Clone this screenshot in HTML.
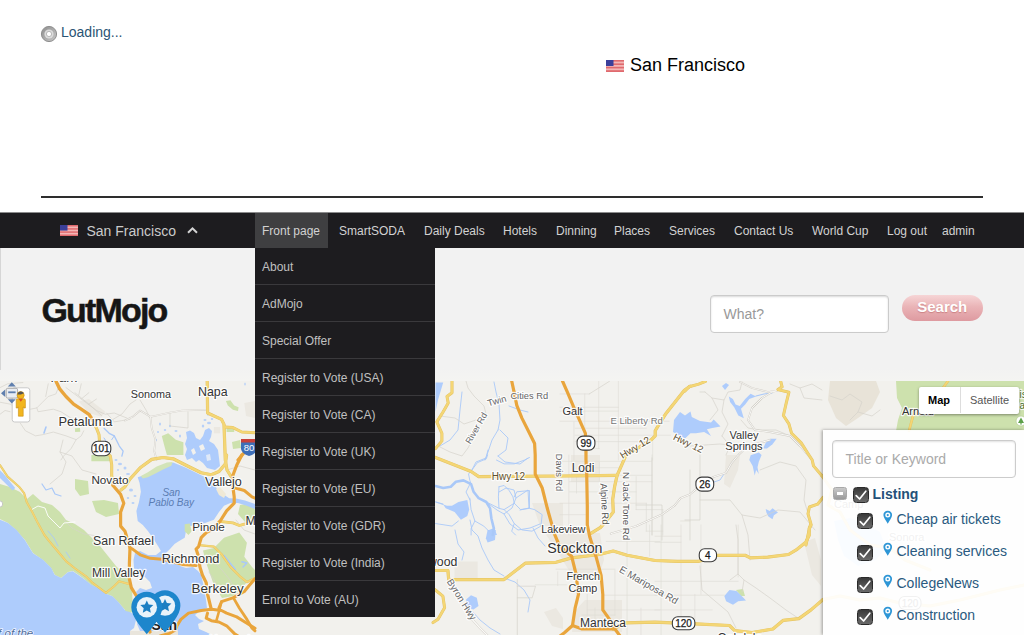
<!DOCTYPE html>
<html><head><meta charset="utf-8">
<style>
*{box-sizing:border-box;margin:0;padding:0}
html,body{width:1024px;height:635px;overflow:hidden;background:#fff;font-family:"Liberation Sans",Arial,sans-serif;}
body{position:relative}
.abs{position:absolute}
#loading{left:61px;top:24px;font-size:14px;color:#2a5474;line-height:17px}
#spin{left:40px;top:24.5px;width:18px;height:18px}
#city{left:630px;top:54.2px;font-size:18px;color:#000;line-height:22px;white-space:nowrap}
.flag{width:18px;height:12px}
#hr{left:41px;top:195.5px;width:942px;height:2px;background:#2e2e2e}
#nav{left:0;top:212px;width:1024px;height:36px;background:#1d1c1f;border-top:1px solid #8b8b8c}
#navt span{position:absolute;top:1px;line-height:37px;font-size:12px;color:#d2d2d2;white-space:nowrap}
#fp{left:255px;top:213px;width:73px;height:35px;background:#3f3f41}
#hdr{left:0;top:248px;width:1024px;height:133px;background:linear-gradient(#f2f2f2 0,#f2f2f2 120px,#f4f4f2 133px)}
#hdrb{left:0;top:248px;width:1px;height:122px;background:#d6d6d6}
#logo{left:41.5px;top:290px;font-size:34px;font-weight:bold;letter-spacing:-1.85px;color:#161616;line-height:40px;-webkit-text-stroke:.5px #161616}
#what{left:710px;top:294.5px;width:179px;height:38.5px;border:1px solid #cbcbcb;border-radius:4px;background:#fff;font-size:14px;color:#999;line-height:37px;padding-left:12.5px;box-shadow:inset 0 1px 2px rgba(0,0,0,.15)}
#sbtn{left:901.5px;top:294.5px;width:81.5px;height:26.5px;border-radius:13px;background:linear-gradient(#f6d5d6,#eab4b7 45%,#de9aa0);color:#fff;font-weight:bold;font-size:15px;text-align:center;line-height:24px;text-shadow:0 1px 1px rgba(170,80,80,.45)}
#dd{left:255px;top:248px;width:180px;height:369px;background:#1d1c1f}
#dd div{height:37px;line-height:39px;font-size:12px;color:#c0c0c0;padding-left:7px;border-bottom:1px solid #3a393c;white-space:nowrap}
#dd div:last-child{border-bottom:none;height:36px}
#map{left:0;top:381px;width:1024px;height:254px;background:#f2f1ed;overflow:hidden}
#panel{left:823px;top:430px;width:201px;height:205px;background:rgba(255,255,255,.93);box-shadow:-1px 0 3px rgba(0,0,0,.35)}
#kw{left:832px;top:439.5px;width:184px;height:38.5px;border:1px solid #ccc;border-radius:4px;background:#fff;font-size:14px;color:#aaa;line-height:36px;padding-left:12.5px;box-shadow:inset 0 1px 2px rgba(0,0,0,.12)}
.cb{position:absolute;width:16px;height:16px;border-radius:3.5px;background:linear-gradient(#3a3a3a,#6a6a6a);border:1px solid #2a2a2a}
.li{position:absolute;left:896.5px;font-size:14px;color:#2a5a80;line-height:17px;white-space:nowrap}
.pin{position:absolute;left:883px;width:9.5px;height:13.5px}
#mt{left:918.5px;top:387px;width:100px;height:26.5px;background:#fff;box-shadow:0 1px 3px rgba(0,0,0,.4);border-radius:2px;font-size:11px;line-height:26px}
#mt b{position:absolute;left:0;width:41px;text-align:center;color:#000}
#mt i{position:absolute;left:41px;width:59px;text-align:center;font-style:normal;color:#555;border-left:1px solid #ddd}
</style></head><body>
<svg id="spin" class="abs" viewBox="0 0 18 18"><defs><linearGradient id="sg" x1="0" y1="0" x2="1" y2="1"><stop offset="0" stop-color="#8e8e8e"/><stop offset="1" stop-color="#c8c8c8"/></linearGradient></defs><circle cx="9" cy="9" r="7.6" fill="url(#sg)" stroke="#8f8f8f" stroke-width="1"/><circle cx="9" cy="9" r="4.6" fill="#dcdcdc"/><circle cx="9" cy="9" r="2.6" fill="#fff" stroke="#aaa" stroke-width=".8"/></svg>
<div id="loading" class="abs">Loading...</div>
<svg class="abs flag" style="left:606px;top:59.5px" viewBox="0 0 18 12"><rect width="18" height="12" fill="#f3b5b5"/><g fill="#e06a6e"><rect y="0" width="18" height="1.6"/><rect y="3.4" width="18" height="1.6"/><rect y="6.8" width="18" height="1.6"/><rect y="10.2" width="18" height="1.8"/></g><rect width="7.5" height="6" fill="#3b3f9a"/></svg>
<div id="city" class="abs">San Francisco</div>
<div id="hr" class="abs"></div>
<div id="nav" class="abs"></div>
<div id="fp" class="abs"></div>
<svg class="abs flag" style="left:60px;top:224.7px;height:11.2px" viewBox="0 0 18 12" preserveAspectRatio="none"><rect width="18" height="12" fill="#f3b5b5"/><g fill="#e06a6e"><rect y="0" width="18" height="1.6"/><rect y="3.4" width="18" height="1.6"/><rect y="6.8" width="18" height="1.6"/><rect y="10.2" width="18" height="1.8"/></g><rect width="7.5" height="6" fill="#3b3f9a"/></svg>
<div id="navt" class="abs" style="left:0;top:212px;width:1024px;height:36px">
<span style="left:86.5px;font-size:14px;color:#cbcbcb">San Francisco</span>
<span style="left:262px">Front page</span>
<span style="left:339px">SmartSODA</span>
<span style="left:424px">Daily Deals</span>
<span style="left:503px">Hotels</span>
<span style="left:556px">Dinning</span>
<span style="left:614px">Places</span>
<span style="left:669px">Services</span>
<span style="left:734px">Contact Us</span>
<span style="left:812px">World Cup</span>
<span style="left:887px">Log out</span>
<span style="left:942px">admin</span>
</div>
<svg class="abs" style="left:186px;top:226px;width:13px;height:9px" viewBox="0 0 13 9"><path d="M2 6.7 L6.5 2.3 L11 6.7" fill="none" stroke="#d4d4d4" stroke-width="2"/></svg>
<div id="hdr" class="abs"></div><div id="hdrb" class="abs"></div>
<div id="logo" class="abs">GutMojo</div>
<div id="what" class="abs">What?</div>
<div id="sbtn" class="abs">Search</div>
<div id="map" class="abs">
<svg width="1024" height="254" viewBox="0 381 1024 254" style="position:absolute;left:0;top:0;font-family:'Liberation Sans',Arial,sans-serif">
<polygon points="0,484 10,487 20,492 27,499 33,494 42,502 52,505 60,512 66,520 75,524 84,530 92,538 100,546 108,556 116,566 124,574 130,580 132,612 126,611 119,603 112,596 106,594 101,590 91,585 83,578 73,571 68,572 61,578 55,575 51,568 43,560 33,553 25,540 16,530 8,523 0,519" fill="#cde1ad" />
<polygon points="75,479 88,481 89,494 80,496 75,489" fill="#cde1ad" />
<polygon points="92,501 104,500 118,503 119,514 106,517 96,512" fill="#cde1ad" />
<polygon points="161.8,435.9 168.2,433.3 175.8,439.7 183.4,442.2 183.4,454.9 166.9,454.9 164.4,446" fill="#cde1ad" />
<polygon points="225.9,401 230.4,400.3 234.2,405.4 238.6,407.3 238,411.1 232.9,409.8 227.8,405.4" fill="#cde1ad" />
<polygon points="226.6,427 234.2,427 234.2,432 226.6,432" fill="#cde1ad" />
<polygon points="244.3,402.9 255,401 255,418.1 246,416" fill="#ebe8e1" />
<polygon points="213.9,427 220.2,427 220.2,433.3 213.9,433.3" fill="#ebe8e1" />
<polygon points="232,442 240,440 241,448 233,449" fill="#cde1ad" />
<polygon points="224,537.7 239.3,532.6 246.9,542.8 244.3,556.7 252,566.9 255,570 255,578 247,582 240,590 232.9,596 222,598 213.9,585 206.2,563.1 203,550.4 213.9,547.9" fill="#cde1ad" />
<polygon points="240,505 252,503 255,510 255,520 245,522 238,514" fill="#cde1ad" />
<polygon points="125,588 132,588 133,612 125,614" fill="#cde1ad" />
<polygon points="532,503 563,503 563,526 540,526" fill="#ebe8e1" />
<polygon points="545,533 600,533 604,560 598,578 575,580 560,556" fill="#ebe8e1" />
<polygon points="585,600 622,600 622,632 572,632 574,612" fill="#ebe8e1" />
<polygon points="571,455 600,455 600,482 571,482" fill="#ebe8e1" />
<polygon points="726,455 740,455 738,470 730,488 724,484" fill="#ebe8e1" />
<polygon points="804,542 815,538 821,560 821,586 812,575" fill="#ebe8e1" />
<polygon points="544,612 556,608 563,618 563,629 552,626" fill="#ebe8e1" />
<polygon points="454.5,561.5 477.7,561.5 477.7,578 454.5,578" fill="#ebe8e1" />
<polygon points="830,381 876,381 880,392 872,408 858,418 846,426 836,418 828,400" fill="#e8e3d8" />
<polygon points="896,381 1024,381 1024,431 896,431 898,420 902,408 897,398" fill="#cde1ad" />
<polygon points="78.7102,401.582 88.8663,399.043 105.37,411.738 101.562,416.816 88.8663,413.007" fill="#ebe8e1" />
<polygon points="74.9016,428.242 79.9797,427.988 80.2336,431.796 75.1555,432.05" fill="#cde1ad" />
<polygon points="91.4054,454.902 109.179,454.902 110.448,461.249 91.4054,461.249" fill="#cde1ad" />
<polygon points="736,590 743,589 745,596 741,596" fill="#cde1ad" />
<polygon points="0,519.7 8,523 16.5,530 24.8,540 33,553.2 43,559.8 51.3,568 54.6,574.7 61.2,578 67.8,572.2 72.8,571.3 82.7,578 91,584.6 100.9,589.5 105.9,593.7 112.5,596.2 119,602.8 125.7,611 130,612 133,614 136,620 134,628 130,631 130,636 0,636" fill="#aeccfc" />
<polygon points="0,470.2 3.8,474 15.2,488 12.7,490.5 0,477.9" fill="#aeccfc" />
<polygon points="137.7,477.2 147.9,474 156.7,467.7 165.6,464.5 173.2,462.6 186,467.7 201.2,475.3 212.6,480.4 216.4,488 221.5,493.1 229.1,498.2 236,498.5 245,500.5 255,504 255,509 246,505.5 238,503 230.4,503 224,505.8 219,512.1 213.9,519.7 203.7,523.6 196.1,524.2 191,526.1 185,525 186,531.3 184.7,537.7 178.3,541.5 174.5,544 170,549 166,553 170,558 176,561 180,566 186,568 193,567 198,571 201.2,575 204,587.7 206,600 207,608 200,611 195,615 199,619 204,621 198,624 199,629 206,632 214,636 176,636 176,631 140,631 137,624 139,616 143,610 141,604 138,598 136,592 140,588 146,590 152,588 150,582 145,577 138,574 134,568 133.5,560 135,553 140,551 148,555 156,555 161,551 158,546 152.9,538 147.9,531 142.8,525 137.7,521 136.4,510.9 139,502 140.9,491.8 139.6,482.9" fill="#aeccfc" />
<polygon points="186,432 190,430.5 194,433 196,438 200,440 203,436 205,430 209,428 212,431 211,437 209,441 214,444 218,450 219,458 220,466 215,470 207,468 203,463 199,460 196,462 192,458 187,460 185,455 187,449 185,444 187,438" fill="#aeccfc" />
<polygon points="435.5,382.5 443.2,382.5 438,400 435.5,411.7" fill="#aeccfc" />
<polygon points="685,415.5 690.5,411.4 691.8,416.9 700,421 711,422.4 713.7,419.6 720.5,426.5 712.3,427.9 706.9,429.2 711,436.1 704.1,432 696,433.3 690.5,433.3 685,438.4 673,432 674,420 680,412" fill="#aeccfc" />
<polygon points="728.8,396.4 732.9,399.1 735.6,404.6 739.7,406 745.2,399.1 750.6,393.7 756.1,396.4 749.3,399.1 745.2,404.6 741,408.7 743.8,418.3 738.3,415.5 734.2,407.3 730.1,401.9" fill="#aeccfc" />
<polygon points="722,386 726,383 729,385 725,390" fill="#aeccfc" />
<polygon points="763,448.4 765.7,442.9 769.8,438.8 776.6,438.8 772.5,444.3 767,448.4" fill="#aeccfc" />
<polygon points="749.3,460 750.6,455.2 758.8,452.5 761.6,455 758.8,461.8 757.5,467.3 758.8,474.1 756.1,470 754.7,475.5 752.7,465.9" fill="#aeccfc" />
<polygon points="765.7,509 769.8,511 772.5,508.3 778,512.4 773.9,515.2 772.5,519.3 768.4,516.5 766.4,512.4" fill="#aeccfc" />
<polygon points="724.3,596.1 729.5,590 736.5,590.9 741.7,596.1 746,600.4 738.2,601.3 733,604.7 726.1,601.3" fill="#aeccfc" />
<polygon points="452,505.8 458.4,502 467.3,500 469.2,509.6 467.3,515.9 460.9,519.7 454.6,512.1 445.7,508.3 443.2,504.5 447,505.8" fill="#aeccfc" />
<polygon points="466.1,599.5 471,595.3 476.8,597.8 478.5,606.1 473.5,609.4 466.9,607.7" fill="#aeccfc" />
<polygon points="487.6,530 495.8,530 495,539.9 487.6,542.4 485.9,538.3" fill="#aeccfc" />
<polygon points="489,530 494,528 497,535 491,535" fill="#aeccfc" />
<polygon points="834,521 850,518 866,524 880,532 886,548 876,560 858,566 844,556 838,540" fill="#aeccfc" />
<polygon points="140.869,475.947 147.851,472.139 156.738,466.426 166.894,462.617 172.607,461.982 171.337,465.791 163.086,469.599 155.468,473.408 147.851,477.217 142.773,478.486" fill="#d3e4b8" />
<polygon points="184.667,524.189 189.745,523.554 191.65,531.171 188.476,534.98 184.667,531.171" fill="#cde1ad" />
<ellipse cx="205" cy="420" rx="1.5" ry="1.1" fill="#b7d0f8"/>
<ellipse cx="209" cy="423" rx="2" ry="1.25" fill="#b7d0f8"/>
<ellipse cx="203" cy="426" rx="1.25" ry="1.5" fill="#b7d0f8"/>
<ellipse cx="212" cy="419" rx="1.25" ry="1" fill="#b7d0f8"/>
<ellipse cx="160" cy="424" rx="1" ry="1.5" fill="#b7d0f8"/>
<ellipse cx="165" cy="430" rx="1.25" ry="1" fill="#b7d0f8"/>
<ellipse cx="170" cy="426" rx="1" ry="1.25" fill="#b7d0f8"/>
<ellipse cx="158" cy="432" rx="1" ry="1" fill="#b7d0f8"/>
<ellipse cx="176" cy="431" rx="1.5" ry="1" fill="#b7d0f8"/>
<ellipse cx="180" cy="436" rx="1" ry="1.5" fill="#b7d0f8"/>
<ellipse cx="156" cy="440" rx="1" ry="1.25" fill="#b7d0f8"/>
<ellipse cx="208" cy="414" rx="0.75" ry="2" fill="#b7d0f8"/>
<ellipse cx="245" cy="384" rx="0.75" ry="1.5" fill="#b7d0f8"/>
<ellipse cx="116" cy="460" rx="1.5" ry="1" fill="#b7d0f8"/>
<ellipse cx="120" cy="464" rx="2" ry="1.25" fill="#b7d0f8"/>
<ellipse cx="125" cy="468" rx="1.5" ry="1.5" fill="#b7d0f8"/>
<ellipse cx="128" cy="474" rx="2" ry="1" fill="#b7d0f8"/>
<ellipse cx="118" cy="470" rx="1" ry="1" fill="#b7d0f8"/>
<ellipse cx="126" cy="484" rx="1.5" ry="1.25" fill="#b7d0f8"/>
<ellipse cx="131" cy="490" rx="2" ry="1.5" fill="#b7d0f8"/>
<ellipse cx="135" cy="496" rx="1.5" ry="1" fill="#b7d0f8"/>
<ellipse cx="128" cy="498" rx="1.25" ry="1" fill="#b7d0f8"/>
<ellipse cx="133" cy="503" rx="1.5" ry="1" fill="#b7d0f8"/>
<polygon points="216,489 220,487 226,494 224,498 219,495" fill="#f0e9d6" />
<polygon points="199,446 203,444 205,449 201,451" fill="#f2f1ed" />
<polygon points="191,450 194,448 196,453 193,455" fill="#f2f1ed" />
<polygon points="206,455 210,454 211,460 207,461" fill="#dfe9f8" />
<polygon points="130,631 178,631 178,636 130,636" fill="#e9e5dc" />
<polyline points="42,484 46,490 52,488 55,494 61,496" fill="none" stroke="#a9c8f8" stroke-width="1.2" stroke-linejoin="round" stroke-linecap="round" />
<polyline points="104,438 108,444 110,452" fill="none" stroke="#a9c8f8" stroke-width="1" stroke-linejoin="round" stroke-linecap="round" />
<polyline points="46,427 44,433" fill="none" stroke="#a9c8f8" stroke-width="1.6" stroke-linejoin="round" stroke-linecap="round" />
<polyline points="224,555.5 230,563 235.4,569.4" fill="none" stroke="#a9c8f8" stroke-width="1.6" stroke-linejoin="round" stroke-linecap="round" />
<polyline points="241.8,561.8 246.9,563 243,567" fill="none" stroke="#a9c8f8" stroke-width="1.4" stroke-linejoin="round" stroke-linecap="round" />
<polyline points="48,531 54,538 58,546" fill="none" stroke="#a9c8f8" stroke-width="0.9" stroke-linejoin="round" stroke-linecap="round" />
<polyline points="66,552 70,558" fill="none" stroke="#a9c8f8" stroke-width="0.9" stroke-linejoin="round" stroke-linecap="round" />
<polyline points="756,396 764,394 772,393" fill="none" stroke="#a9c8f8" stroke-width="1.2" stroke-linejoin="round" stroke-linecap="round" />
<polyline points="435.5,486.1 443.2,488 450.8,486.7 455.9,481.7 463.5,480.4 471.1,484.2 473.6,491.8 478.7,498.2 486.3,502 490.1,508.3 491.4,518.5 493.9,528.6 492.7,535" fill="none" stroke="#a9c8f8" stroke-width="2.6" stroke-linejoin="round" stroke-linecap="round" />
<polyline points="471,472 476,462 486,458 488,450" fill="none" stroke="#a9c8f8" stroke-width="0.9" stroke-linejoin="round" stroke-linecap="round" />
<polyline points="436,502 443,504" fill="none" stroke="#a9c8f8" stroke-width="0.9" stroke-linejoin="round" stroke-linecap="round" />
<polyline points="498,456 505,462 520,464 528,458" fill="none" stroke="#a9c8f8" stroke-width="0.9" stroke-linejoin="round" stroke-linecap="round" />
<polyline points="486,502 497,510 504,514 512,508 516,498 514,490 506,488 499,492" fill="none" stroke="#a9c8f8" stroke-width="0.9" stroke-linejoin="round" stroke-linecap="round" />
<polyline points="504,514 510,524 518,530 530,528 540,524" fill="none" stroke="#a9c8f8" stroke-width="0.9" stroke-linejoin="round" stroke-linecap="round" />
<polyline points="516,498 528,490 529,508 520,510" fill="none" stroke="#a9c8f8" stroke-width="0.9" stroke-linejoin="round" stroke-linecap="round" />
<polyline points="470,520 472,530 478,536 482,548 488,560 494,570 504,576" fill="none" stroke="#a9c8f8" stroke-width="0.9" stroke-linejoin="round" stroke-linecap="round" />
<polyline points="455,530 458,544 464,552 462,560" fill="none" stroke="#a9c8f8" stroke-width="0.9" stroke-linejoin="round" stroke-linecap="round" />
<polyline points="470,484 466,492 470,500" fill="none" stroke="#a9c8f8" stroke-width="0.9" stroke-linejoin="round" stroke-linecap="round" />
<polyline points="494,382 496,392 499,404 500,420 498,430" fill="none" stroke="#a9c8f8" stroke-width="0.9" stroke-linejoin="round" stroke-linecap="round" />
<polyline points="462,392 460,410 458,430 450,440 440,446" fill="none" stroke="#a9c8f8" stroke-width="0.9" stroke-linejoin="round" stroke-linecap="round" />
<polyline points="498,430 492,440 488,452 485,460" fill="none" stroke="#a9c8f8" stroke-width="0.9" stroke-linejoin="round" stroke-linecap="round" />
<polyline points="500,430 508,438 506,450 498,456" fill="none" stroke="#a9c8f8" stroke-width="0.9" stroke-linejoin="round" stroke-linecap="round" />
<polyline points="509,406 520,410 528,412" fill="none" stroke="#a9c8f8" stroke-width="0.9" stroke-linejoin="round" stroke-linecap="round" />
<polyline points="473,612 480,620 490,628 500,634" fill="none" stroke="#a9c8f8" stroke-width="0.9" stroke-linejoin="round" stroke-linecap="round" />
<polyline points="504,578 515,582 524,590 530,600 528,612" fill="none" stroke="#a9c8f8" stroke-width="0.9" stroke-linejoin="round" stroke-linecap="round" />
<polyline points="533,528 538,538 545,546" fill="none" stroke="#a9c8f8" stroke-width="0.9" stroke-linejoin="round" stroke-linecap="round" />
<polyline points="709,478 714,482 720,480 724,474" fill="none" stroke="#a9c8f8" stroke-width="0.9" stroke-linejoin="round" stroke-linecap="round" />
<polyline points="471.086,484.199 469.816,480.39 468.547,474.043 473.625,467.695 477.433,462.617 486.32,458.809 487.589,455" fill="none" stroke="#a9c8f8" stroke-width="0.9" stroke-linejoin="round" stroke-linecap="round" />
<polyline points="499.015,486.738 504.093,485.468 509.171,490.547 512.98,496.894 514.249,503.242 504.093,509.589 499.015,508.32 498.38,496.894 499.015,486.738" fill="none" stroke="#a9c8f8" stroke-width="0.9" stroke-linejoin="round" stroke-linecap="round" />
<polyline points="514.249,496.894 516.788,491.816 529.483,490.547 529.483,508.32 520.597,509.589 514.249,503.242" fill="none" stroke="#a9c8f8" stroke-width="0.9" stroke-linejoin="round" stroke-linecap="round" />
<polyline points="504.093,509.589 509.171,514.667 514.249,523.554 521.866,529.902 532.022,531.171 540.909,526.093 542.179,514.667 534.562,509.589 529.483,508.32" fill="none" stroke="#a9c8f8" stroke-width="0.9" stroke-linejoin="round" stroke-linecap="round" />
<polyline points="486.32,501.972 493.937,505.781 499.015,508.32" fill="none" stroke="#a9c8f8" stroke-width="0.9" stroke-linejoin="round" stroke-linecap="round" />
<polyline points="435.539,501.972 443.156,504.511" fill="none" stroke="#a9c8f8" stroke-width="0.9" stroke-linejoin="round" stroke-linecap="round" />
<polyline points="435.539,523.554 452.043,526.093 458.39,521.015" fill="none" stroke="#a9c8f8" stroke-width="0.9" stroke-linejoin="round" stroke-linecap="round" />
<polyline points="469.816,498.164 471.086,509.589 474.894,521.015 471.086,528.632 471.086,534.98" fill="none" stroke="#a9c8f8" stroke-width="0.9" stroke-linejoin="round" stroke-linecap="round" />
<polyline points="474.894,521.015 483.781,526.093 488.859,531.171" fill="none" stroke="#a9c8f8" stroke-width="0.9" stroke-linejoin="round" stroke-linecap="round" />
<polyline points="514.249,523.554 511.71,531.171 515.519,534.98" fill="none" stroke="#a9c8f8" stroke-width="0.9" stroke-linejoin="round" stroke-linecap="round" />
<polyline points="496.476,460.078 504.093,463.887 514.249,463.887 524.405,460.078 529.483,457.539" fill="none" stroke="#a9c8f8" stroke-width="0.9" stroke-linejoin="round" stroke-linecap="round" />
<polyline points="104.101,428.242 109.179,433.32 114.257,435.859 119.335,446.015 123.143,451.093 121.874,456.171" fill="none" stroke="#a9c8f8" stroke-width="1.3" stroke-linejoin="round" stroke-linecap="round" />
<polyline points="114.257,435.859 111.718,439.667" fill="none" stroke="#a9c8f8" stroke-width="1" stroke-linejoin="round" stroke-linecap="round" />
<polyline points="63,440 60,452 66,462 62,474 50,484" fill="none" stroke="#d5d2cb" stroke-width="0.7" stroke-linejoin="round" stroke-linecap="round" />
<polyline points="60,452 72,456 82,470 96,474" fill="none" stroke="#d5d2cb" stroke-width="0.7" stroke-linejoin="round" stroke-linecap="round" />
<polyline points="140,400 146,410 150,418" fill="none" stroke="#d5d2cb" stroke-width="0.7" stroke-linejoin="round" stroke-linecap="round" />
<polyline points="170,412 170,426 188,428 188,412" fill="none" stroke="#d5d2cb" stroke-width="0.7" stroke-linejoin="round" stroke-linecap="round" />
<polyline points="112,420 122,414 130,404 136,400" fill="none" stroke="#d5d2cb" stroke-width="0.7" stroke-linejoin="round" stroke-linecap="round" />
<polyline points="64,520 72,528 84,534 98,536 110,540" fill="none" stroke="#d5d2cb" stroke-width="0.7" stroke-linejoin="round" stroke-linecap="round" />
<polyline points="227,470 240,466 255,470" fill="none" stroke="#d5d2cb" stroke-width="0.7" stroke-linejoin="round" stroke-linecap="round" />
<polyline points="236,520 244,530 255,534" fill="none" stroke="#d5d2cb" stroke-width="0.7" stroke-linejoin="round" stroke-linecap="round" />
<polyline points="209,572 214,580 220,592" fill="none" stroke="#d5d2cb" stroke-width="0.7" stroke-linejoin="round" stroke-linecap="round" />
<polyline points="212,560 222,570 230,580 236,592" fill="none" stroke="#d5d2cb" stroke-width="0.7" stroke-linejoin="round" stroke-linecap="round" />
<polyline points="31,510 38,506 45,508 48,516 54,522 60,528 64,523 75,522" fill="none" stroke="#fff" stroke-width="0.9" stroke-linejoin="round" stroke-linecap="round" />
<polyline points="584.756,393.965 584.756,459.98" fill="none" stroke="#dedbd5" stroke-width="0.6" stroke-linejoin="round" stroke-linecap="round" />
<polyline points="598.72,380 598.72,448.554" fill="none" stroke="#dedbd5" stroke-width="0.6" stroke-linejoin="round" stroke-linecap="round" />
<polyline points="618.398,380 618.398,459.98" fill="none" stroke="#dedbd5" stroke-width="0.6" stroke-linejoin="round" stroke-linecap="round" />
<polyline points="652.675,435.859 652.675,459.98" fill="none" stroke="#dedbd5" stroke-width="0.6" stroke-linejoin="round" stroke-linecap="round" />
<polyline points="573.965,421.894 573.965,459.98" fill="none" stroke="#dedbd5" stroke-width="0.6" stroke-linejoin="round" stroke-linecap="round" />
<polyline points="560,393.965 589.199,393.965" fill="none" stroke="#dedbd5" stroke-width="0.6" stroke-linejoin="round" stroke-linecap="round" />
<polyline points="560,407.295 618.398,407.295" fill="none" stroke="#dedbd5" stroke-width="0.6" stroke-linejoin="round" stroke-linecap="round" />
<polyline points="560,411.103 618.398,411.103" fill="none" stroke="#dedbd5" stroke-width="0.6" stroke-linejoin="round" stroke-linecap="round" />
<polyline points="560,421.259 669.179,421.259" fill="none" stroke="#dedbd5" stroke-width="0.6" stroke-linejoin="round" stroke-linecap="round" />
<polyline points="575.234,428.242 646.327,428.242" fill="none" stroke="#dedbd5" stroke-width="0.6" stroke-linejoin="round" stroke-linecap="round" />
<polyline points="575.234,435.224 670.448,435.224" fill="none" stroke="#dedbd5" stroke-width="0.6" stroke-linejoin="round" stroke-linecap="round" />
<polyline points="575.234,441.572 651.405,441.572" fill="none" stroke="#dedbd5" stroke-width="0.6" stroke-linejoin="round" stroke-linecap="round" />
<polyline points="585.39,448.554 599.355,448.554" fill="none" stroke="#dedbd5" stroke-width="0.6" stroke-linejoin="round" stroke-linecap="round" />
<polyline points="589.199,393.965 609.511,381.27" fill="none" stroke="#d5d2cb" stroke-width="0.7" stroke-linejoin="round" stroke-linecap="round" />
<polyline points="568.887,455 568.887,534.98" fill="none" stroke="#dedbd5" stroke-width="0.6" stroke-linejoin="round" stroke-linecap="round" />
<polyline points="576.504,476.582 576.504,493.086" fill="none" stroke="#dedbd5" stroke-width="0.6" stroke-linejoin="round" stroke-linecap="round" />
<polyline points="636.171,476.582 636.171,509.589" fill="none" stroke="#dedbd5" stroke-width="0.6" stroke-linejoin="round" stroke-linecap="round" />
<polyline points="652.04,455 652.04,534.98" fill="none" stroke="#dedbd5" stroke-width="0.6" stroke-linejoin="round" stroke-linecap="round" />
<polyline points="662.831,509.589 662.831,534.98" fill="none" stroke="#dedbd5" stroke-width="0.6" stroke-linejoin="round" stroke-linecap="round" />
<polyline points="646.327,503.242 646.327,531.171" fill="none" stroke="#dedbd5" stroke-width="0.6" stroke-linejoin="round" stroke-linecap="round" />
<polyline points="599.355,462.617 599.355,480.39" fill="none" stroke="#dedbd5" stroke-width="0.6" stroke-linejoin="round" stroke-linecap="round" />
<polyline points="603.798,491.816 603.798,503.242" fill="none" stroke="#dedbd5" stroke-width="0.6" stroke-linejoin="round" stroke-linecap="round" />
<polyline points="560,461.348 651.405,461.348" fill="none" stroke="#dedbd5" stroke-width="0.6" stroke-linejoin="round" stroke-linecap="round" />
<polyline points="589.199,467.695 619.667,467.695" fill="none" stroke="#dedbd5" stroke-width="0.6" stroke-linejoin="round" stroke-linecap="round" />
<polyline points="619.667,475.312 652.04,475.312" fill="none" stroke="#dedbd5" stroke-width="0.6" stroke-linejoin="round" stroke-linecap="round" />
<polyline points="569.521,481.66 652.04,481.66" fill="none" stroke="#dedbd5" stroke-width="0.6" stroke-linejoin="round" stroke-linecap="round" />
<polyline points="569.521,491.816 636.171,491.816" fill="none" stroke="#dedbd5" stroke-width="0.6" stroke-linejoin="round" stroke-linecap="round" />
<polyline points="560,503.242 646.327,503.242" fill="none" stroke="#dedbd5" stroke-width="0.6" stroke-linejoin="round" stroke-linecap="round" />
<polyline points="636.171,509.589 662.831,509.589" fill="none" stroke="#dedbd5" stroke-width="0.6" stroke-linejoin="round" stroke-linecap="round" />
<polyline points="560,514.667 585.39,514.667" fill="none" stroke="#dedbd5" stroke-width="0.6" stroke-linejoin="round" stroke-linecap="round" />
<polyline points="680.604,521.015 689.999,521.015" fill="none" stroke="#dedbd5" stroke-width="0.6" stroke-linejoin="round" stroke-linecap="round" />
<polyline points="646.327,531.171 662.831,531.171" fill="none" stroke="#dedbd5" stroke-width="0.6" stroke-linejoin="round" stroke-linecap="round" />
<polyline points="627.071,541.467 627.071,635.071" fill="none" stroke="#dedbd5" stroke-width="0.6" stroke-linejoin="round" stroke-linecap="round" />
<polyline points="614.937,570.068 614.937,615.137" fill="none" stroke="#dedbd5" stroke-width="0.6" stroke-linejoin="round" stroke-linecap="round" />
<polyline points="640.938,608.203 640.938,635.071" fill="none" stroke="#dedbd5" stroke-width="0.6" stroke-linejoin="round" stroke-linecap="round" />
<polyline points="649.605,525 649.605,556.201" fill="none" stroke="#dedbd5" stroke-width="0.6" stroke-linejoin="round" stroke-linecap="round" />
<polyline points="587.202,594.336 587.202,622.071" fill="none" stroke="#dedbd5" stroke-width="0.6" stroke-linejoin="round" stroke-linecap="round" />
<polyline points="595.003,608.203 595.003,622.071" fill="none" stroke="#dedbd5" stroke-width="0.6" stroke-linejoin="round" stroke-linecap="round" />
<polyline points="557.734,571.802 557.734,585.669" fill="none" stroke="#dedbd5" stroke-width="0.6" stroke-linejoin="round" stroke-linecap="round" />
<polyline points="606.27,541.467 660.005,541.467" fill="none" stroke="#dedbd5" stroke-width="0.6" stroke-linejoin="round" stroke-linecap="round" />
<polyline points="556.001,569.202 614.937,569.202" fill="none" stroke="#dedbd5" stroke-width="0.6" stroke-linejoin="round" stroke-linecap="round" />
<polyline points="535.2,584.802 566.401,584.802" fill="none" stroke="#dedbd5" stroke-width="0.6" stroke-linejoin="round" stroke-linecap="round" />
<polyline points="602.803,595.203 660.005,595.203" fill="none" stroke="#dedbd5" stroke-width="0.6" stroke-linejoin="round" stroke-linecap="round" />
<polyline points="587.202,609.937 660.005,609.937" fill="none" stroke="#dedbd5" stroke-width="0.6" stroke-linejoin="round" stroke-linecap="round" />
<polyline points="582.002,615.137 614.937,615.137" fill="none" stroke="#dedbd5" stroke-width="0.6" stroke-linejoin="round" stroke-linecap="round" />
<polyline points="661.066,525 661.066,635.052" fill="none" stroke="#dedbd5" stroke-width="0.6" stroke-linejoin="round" stroke-linecap="round" />
<polyline points="680.997,525 680.997,628.986" fill="none" stroke="#dedbd5" stroke-width="0.6" stroke-linejoin="round" stroke-linecap="round" />
<polyline points="700.927,525 700.927,594.324" fill="none" stroke="#dedbd5" stroke-width="0.6" stroke-linejoin="round" stroke-linecap="round" />
<polyline points="738.189,525 738.189,576.993" fill="none" stroke="#dedbd5" stroke-width="0.6" stroke-linejoin="round" stroke-linecap="round" />
<polyline points="694.861,594.324 694.861,622.054" fill="none" stroke="#dedbd5" stroke-width="0.6" stroke-linejoin="round" stroke-linecap="round" />
<polyline points="655,536.265 680.997,536.265" fill="none" stroke="#dedbd5" stroke-width="0.6" stroke-linejoin="round" stroke-linecap="round" />
<polyline points="655,542.331 680.997,542.331" fill="none" stroke="#dedbd5" stroke-width="0.6" stroke-linejoin="round" stroke-linecap="round" />
<polyline points="655,581.326 738.189,581.326" fill="none" stroke="#dedbd5" stroke-width="0.6" stroke-linejoin="round" stroke-linecap="round" />
<polyline points="655,595.191 724.324,595.191" fill="none" stroke="#dedbd5" stroke-width="0.6" stroke-linejoin="round" stroke-linecap="round" />
<polyline points="655,609.922 712.192,609.922" fill="none" stroke="#dedbd5" stroke-width="0.6" stroke-linejoin="round" stroke-linecap="round" />
<polyline points="652,458 652,535" fill="none" stroke="#d5d2cb" stroke-width="0.7" stroke-linejoin="round" stroke-linecap="round" />
<polyline points="636,505 662,505 662,540" fill="none" stroke="#d5d2cb" stroke-width="0.7" stroke-linejoin="round" stroke-linecap="round" />
<polyline points="690,470 690,540" fill="none" stroke="#d5d2cb" stroke-width="0.7" stroke-linejoin="round" stroke-linecap="round" />
<polyline points="700,455 700,520 685,520" fill="none" stroke="#d5d2cb" stroke-width="0.7" stroke-linejoin="round" stroke-linecap="round" />
<polyline points="700,500 730,500 742,515 760,518 778,510 800,512 815,530" fill="none" stroke="#d5d2cb" stroke-width="0.7" stroke-linejoin="round" stroke-linecap="round" />
<polyline points="742,515 748,535 750,560" fill="none" stroke="#d5d2cb" stroke-width="0.7" stroke-linejoin="round" stroke-linecap="round" />
<polyline points="705,392 712,398 718,410 710,420" fill="none" stroke="#d5d2cb" stroke-width="0.7" stroke-linejoin="round" stroke-linecap="round" />
<polyline points="712,398 724,400 728,392 740,390 742,382" fill="none" stroke="#d5d2cb" stroke-width="0.7" stroke-linejoin="round" stroke-linecap="round" />
<polyline points="700,392 705,392" fill="none" stroke="#d5d2cb" stroke-width="0.7" stroke-linejoin="round" stroke-linecap="round" />
<polyline points="724,400 722,412 728,424 722,436" fill="none" stroke="#d5d2cb" stroke-width="0.7" stroke-linejoin="round" stroke-linecap="round" />
<polyline points="741,420 748,428 760,430 776,430 790,436" fill="none" stroke="#d5d2cb" stroke-width="0.7" stroke-linejoin="round" stroke-linecap="round" />
<polyline points="722,436 730,446 726,455" fill="none" stroke="#d5d2cb" stroke-width="0.7" stroke-linejoin="round" stroke-linecap="round" />
<polyline points="690,446 720,444 740,446 760,448" fill="none" stroke="#d5d2cb" stroke-width="0.7" stroke-linejoin="round" stroke-linecap="round" />
<polyline points="738,574 738,540 736,525" fill="none" stroke="#d5d2cb" stroke-width="0.7" stroke-linejoin="round" stroke-linecap="round" />
<polyline points="730,580 738,574 744,580 742,592" fill="none" stroke="#d5d2cb" stroke-width="0.7" stroke-linejoin="round" stroke-linecap="round" />
<polyline points="744,580 756,588 770,598 786,610 798,618" fill="none" stroke="#d5d2cb" stroke-width="0.7" stroke-linejoin="round" stroke-linecap="round" />
<polyline points="700,566 702,590 728,612 736,628" fill="none" stroke="#d5d2cb" stroke-width="0.7" stroke-linejoin="round" stroke-linecap="round" />
<polyline points="790,384 800,388 812,384 822,390" fill="none" stroke="#d5d2cb" stroke-width="0.7" stroke-linejoin="round" stroke-linecap="round" />
<polyline points="800,388 804,398 822,400" fill="none" stroke="#d5d2cb" stroke-width="0.7" stroke-linejoin="round" stroke-linecap="round" />
<polyline points="760,470 780,462 796,466 806,480 804,500 810,520" fill="none" stroke="#d5d2cb" stroke-width="0.7" stroke-linejoin="round" stroke-linecap="round" />
<polyline points="440,416 455,418 464,424 476,420 486,414 484,406 474,396 468,388 466,381" fill="none" stroke="#d5d2cb" stroke-width="0.7" stroke-linejoin="round" stroke-linecap="round" />
<polyline points="438,446 450,452 462,456 468,448 472,440" fill="none" stroke="#d5d2cb" stroke-width="0.7" stroke-linejoin="round" stroke-linecap="round" />
<polyline points="830,396 842,400 850,394 862,402 858,412 850,420" fill="none" stroke="#d5d2cb" stroke-width="0.7" stroke-linejoin="round" stroke-linecap="round" />
<polyline points="858,412 872,416 880,410" fill="none" stroke="#d5d2cb" stroke-width="0.7" stroke-linejoin="round" stroke-linecap="round" />
<polyline points="517.3,579.6 517.3,635" fill="none" stroke="#d5d2cb" stroke-width="0.7" stroke-linejoin="round" stroke-linecap="round" />
<polyline points="517.3,586.2 535.5,586.2 532.2,597.8 517.3,597.8" fill="none" stroke="#d5d2cb" stroke-width="0.7" stroke-linejoin="round" stroke-linecap="round" />
<polyline points="0,387.617 7.61711,383.809 22.8513,382.539" fill="none" stroke="#d5d2cb" stroke-width="0.7" stroke-linejoin="round" stroke-linecap="round" />
<polyline points="0,402.217 10.1562,404.121 20.3123,410.468 30.4685,409.199 36.816,407.929 41.8941,402.851 48.2417,396.504 55.8588,393.965 58.3979,387.617 55.8588,382.539" fill="none" stroke="#d5d2cb" stroke-width="0.7" stroke-linejoin="round" stroke-linecap="round" />
<polyline points="36.816,407.929 38.0856,411.738 53.3198,409.199 60.9369,411.738 71.0931,418.086 76.1711,420.625" fill="none" stroke="#d5d2cb" stroke-width="0.7" stroke-linejoin="round" stroke-linecap="round" />
<polyline points="20.3123,423.164 25.3904,430.781 35.5465,435.859 43.1636,434.589 53.3198,432.05 66.015,435.859 76.1711,439.667 81.2492,435.859 83.7882,430.781" fill="none" stroke="#d5d2cb" stroke-width="0.7" stroke-linejoin="round" stroke-linecap="round" />
<polyline points="76.1711,439.667 71.0931,448.554 63.4759,456.171 60.9369,459.98" fill="none" stroke="#d5d2cb" stroke-width="0.7" stroke-linejoin="round" stroke-linecap="round" />
<polyline points="66.015,387.617 81.2492,399.043 96.4834,410.468 105.37,414.277 114.257,413.007 126.952,418.086" fill="none" stroke="#d5d2cb" stroke-width="0.7" stroke-linejoin="round" stroke-linecap="round" />
<polyline points="74.9016,392.695 88.8663,404.121 101.562,415.547" fill="none" stroke="#d5d2cb" stroke-width="0.7" stroke-linejoin="round" stroke-linecap="round" />
<polyline points="81.2492,383.809 78.7102,395.234" fill="none" stroke="#d5d2cb" stroke-width="0.7" stroke-linejoin="round" stroke-linecap="round" />
<polyline points="106.64,413.007 114.257,421.894 121.874,420.625 129.999,419.355" fill="none" stroke="#d5d2cb" stroke-width="0.7" stroke-linejoin="round" stroke-linecap="round" />
<polyline points="48.2417,383.809 45.7027,396.504" fill="none" stroke="#d5d2cb" stroke-width="0.7" stroke-linejoin="round" stroke-linecap="round" />
<polyline points="0,414.277 5.07808,410.468 10.1562,411.738" fill="none" stroke="#d5d2cb" stroke-width="0.7" stroke-linejoin="round" stroke-linecap="round" />
<polyline points="81.2492,399.043 88.8663,392.695" fill="none" stroke="#d5d2cb" stroke-width="0.7" stroke-linejoin="round" stroke-linecap="round" />
<polyline points="88.8663,404.121 96.4834,399.043" fill="none" stroke="#d5d2cb" stroke-width="0.7" stroke-linejoin="round" stroke-linecap="round" />
<polyline points="125,420.6 132.6,416.8 140.2,410.5 150.4,416.8 156.7,415.5 168.2,413 182.1,410.5 206.2,409.8" fill="none" stroke="#d0cdc6" stroke-width="1.7" stroke-linejoin="round" stroke-linecap="round" />
<polyline points="150.4,416.8 151.7,428.2 155.5,439.7 154.2,451.1 156.7,460" fill="none" stroke="#d0cdc6" stroke-width="1.7" stroke-linejoin="round" stroke-linecap="round" />
<polyline points="740,382 752,388 768,392 780,390" fill="none" stroke="#d0cdc6" stroke-width="1.7" stroke-linejoin="round" stroke-linecap="round" />
<polyline points="812,460 800,446 790,436 770,432 755,430 748,420 752,408 762,398 772,392 780,390" fill="none" stroke="#d0cdc6" stroke-width="1.8" stroke-linejoin="round" stroke-linecap="round" />
<polyline points="610.8,533.7 636.2,526.1 661.6,514.7 674.3,505.8 680.6,498.2 690,494.4 696,489.2 713.7,476.9 726,472.8 731.5,463.2 738.3,455 748,446 770,440" fill="none" stroke="#d0cdc6" stroke-width="1.9" stroke-linejoin="round" stroke-linecap="round" />
<polyline points="470,617 480,628 488,636" fill="none" stroke="#d0cdc6" stroke-width="2.1" stroke-linejoin="round" stroke-linecap="round" />
<polyline points="125,420.6 132.6,416.8 140.2,410.5 150.4,416.8 156.7,415.5 168.2,413 182.1,410.5 206.2,409.8" fill="none" stroke="#fbfaf8" stroke-width="0.8" stroke-linejoin="round" stroke-linecap="round" />
<polyline points="150.4,416.8 151.7,428.2 155.5,439.7 154.2,451.1 156.7,460" fill="none" stroke="#fbfaf8" stroke-width="0.8" stroke-linejoin="round" stroke-linecap="round" />
<polyline points="740,382 752,388 768,392 780,390" fill="none" stroke="#fbfaf8" stroke-width="0.8" stroke-linejoin="round" stroke-linecap="round" />
<polyline points="812,460 800,446 790,436 770,432 755,430 748,420 752,408 762,398 772,392 780,390" fill="none" stroke="#fbfaf8" stroke-width="0.9" stroke-linejoin="round" stroke-linecap="round" />
<polyline points="610.8,533.7 636.2,526.1 661.6,514.7 674.3,505.8 680.6,498.2 690,494.4 696,489.2 713.7,476.9 726,472.8 731.5,463.2 738.3,455 748,446 770,440" fill="none" stroke="#fbfaf8" stroke-width="1" stroke-linejoin="round" stroke-linecap="round" />
<polyline points="470,617 480,628 488,636" fill="none" stroke="#fbfaf8" stroke-width="1.2" stroke-linejoin="round" stroke-linecap="round" />
<polyline points="0,465.2 7.6,476.6 19,486.7 24.1,493.1 26.7,502 31.7,510.9 38.1,523.6 44.4,535 49.6,541.6 57.9,551.5 66.2,561.4 74.4,568 86,576.3 92.6,582.9 105.9,592.9 114.1,586.2 119,581.3 129,584" fill="none" stroke="#e3c262" stroke-width="2.1" stroke-linejoin="round" stroke-linecap="round" />
<polyline points="91.4,418.1 96.5,428.2 99,434.6 99.5,441 103,449 110.4,456.2 111.7,465 111.7,475.3 113,485.5" fill="none" stroke="#e3c262" stroke-width="3" stroke-linejoin="round" stroke-linecap="round" />
<polyline points="121,490 125,486.7 130,479 140.2,467.7 151.7,459.4 163,457.5 173.2,458.8 186,465.2 201.2,472.8 211.3,474.7 219,471.5 225.3,463.9 226.6,455" fill="none" stroke="#e3c262" stroke-width="3.2" stroke-linejoin="round" stroke-linecap="round" />
<polyline points="207.2,380 207.6,413 221.5,419.4 224,424.4 225.3,460 227,470 232,478" fill="none" stroke="#e3c262" stroke-width="3.2" stroke-linejoin="round" stroke-linecap="round" />
<polyline points="224.7,427 232.9,427.6 241.8,432 255,432.7" fill="none" stroke="#e3c262" stroke-width="3" stroke-linejoin="round" stroke-linecap="round" />
<polyline points="221.5,521.6 232.9,522.9 239.3,525.5 244.3,524.2 255,522" fill="none" stroke="#e3c262" stroke-width="2.8" stroke-linejoin="round" stroke-linecap="round" />
<polyline points="201.2,545.3 213.9,546.6 221.5,554.2 230.4,566.9 239.3,575.8 246.9,582.1 255,578.3" fill="none" stroke="#e3c262" stroke-width="2.3" stroke-linejoin="round" stroke-linecap="round" />
<polyline points="452,381.3 452,392.7 447,396.5 448.2,402.9 443.2,411.7 436.8,421.9 441.9,433.3 441.9,440.9 435.5,448.6" fill="none" stroke="#e3c262" stroke-width="3" stroke-linejoin="round" stroke-linecap="round" />
<polyline points="435.5,457.5 452,463.9 471.1,471.5 478.7,476.6 563,476 617.1,475.3" fill="none" stroke="#e3c262" stroke-width="3.2" stroke-linejoin="round" stroke-linecap="round" />
<polyline points="690,386.3 684.4,390.2 674.3,402.9 665.4,414.3 659,424.4 655.2,430.8 655.2,435.9 651.4,439.7 641.2,446 631.1,452.4 626,455 622.2,463.9 617.1,475.3 614.6,486.7 612.7,499.4 613.3,512.1 608.2,518.5 600.6,527.4 590.5,533.7" fill="none" stroke="#e3c262" stroke-width="3.2" stroke-linejoin="round" stroke-linecap="round" />
<polyline points="685,391 689.1,386.8 698.7,384.1 705.5,381.4" fill="none" stroke="#e3c262" stroke-width="3" stroke-linejoin="round" stroke-linecap="round" />
<polyline points="780.7,381.4 782.1,386.8 778,389.6 788.9,392.3 786.2,403.2 783.4,415.5 788.9,423.8 791.6,433.3 801.2,442.9 808.1,453.8 812.2,460 813.5,465.9 821.7,475.5" fill="none" stroke="#e3c262" stroke-width="3" stroke-linejoin="round" stroke-linecap="round" />
<polyline points="823,497.4 817.6,504.2 809.4,507 808,513.8 810.8,523.4 808,535 806,545" fill="none" stroke="#e3c262" stroke-width="3" stroke-linejoin="round" stroke-linecap="round" />
<polyline points="434.7,570.5 447.9,570.5 448.7,579.6 504.1,579.6 525.6,563.1 556,562.3 571.6,557.9 599.3,554.5 613.2,551 627.1,555.3 655,560.5 677.5,561.4 698.3,561.4 717.4,555.3 745.1,555.3 750.3,557.9 767.7,557.1 788.5,554.5 797.1,549.3 805.8,542.3 809.2,535.4 809.2,528.5 811,525" fill="none" stroke="#e3c262" stroke-width="3.2" stroke-linejoin="round" stroke-linecap="round" />
<polyline points="434.7,589.5 442.9,596.2 444.6,607.7 438,619.3 433,622.6" fill="none" stroke="#e3c262" stroke-width="3" stroke-linejoin="round" stroke-linecap="round" />
<polyline points="613.2,629 625.3,622.9 655,622.1 672.3,622.9 694.9,623.8 729.5,625.5 734.7,630.7 752.1,632.5 772.9,629 783.3,620.3 798.9,618.6 811,609.9 823.1,599.5" fill="none" stroke="#e3c262" stroke-width="3.2" stroke-linejoin="round" stroke-linecap="round" />
<polyline points="948,381 940,392 925,405 913,416 909,431" fill="none" stroke="#e3c262" stroke-width="2.6" stroke-linejoin="round" stroke-linecap="round" />
<polyline points="823,599.5 840,596 860,600 880,598 900,603 930,606 960,600 1000,590 1024,585" fill="none" stroke="#e3c262" stroke-width="3" stroke-linejoin="round" stroke-linecap="round" />
<polyline points="821.7,475.5 832,490 828,505 840,512 850,530 870,545 890,548 905,560 930,570" fill="none" stroke="#e3c262" stroke-width="3" stroke-linejoin="round" stroke-linecap="round" />
<polyline points="0,465.2 7.6,476.6 19,486.7 24.1,493.1 26.7,502 31.7,510.9 38.1,523.6 44.4,535 49.6,541.6 57.9,551.5 66.2,561.4 74.4,568 86,576.3 92.6,582.9 105.9,592.9 114.1,586.2 119,581.3 129,584" fill="none" stroke="#f4d675" stroke-width="1.3" stroke-linejoin="round" stroke-linecap="round" />
<polyline points="91.4,418.1 96.5,428.2 99,434.6 99.5,441 103,449 110.4,456.2 111.7,465 111.7,475.3 113,485.5" fill="none" stroke="#f4d675" stroke-width="2.2" stroke-linejoin="round" stroke-linecap="round" />
<polyline points="121,490 125,486.7 130,479 140.2,467.7 151.7,459.4 163,457.5 173.2,458.8 186,465.2 201.2,472.8 211.3,474.7 219,471.5 225.3,463.9 226.6,455" fill="none" stroke="#f4d675" stroke-width="2.4" stroke-linejoin="round" stroke-linecap="round" />
<polyline points="207.2,380 207.6,413 221.5,419.4 224,424.4 225.3,460 227,470 232,478" fill="none" stroke="#f4d675" stroke-width="2.4" stroke-linejoin="round" stroke-linecap="round" />
<polyline points="224.7,427 232.9,427.6 241.8,432 255,432.7" fill="none" stroke="#f4d675" stroke-width="2.2" stroke-linejoin="round" stroke-linecap="round" />
<polyline points="221.5,521.6 232.9,522.9 239.3,525.5 244.3,524.2 255,522" fill="none" stroke="#f4d675" stroke-width="2" stroke-linejoin="round" stroke-linecap="round" />
<polyline points="201.2,545.3 213.9,546.6 221.5,554.2 230.4,566.9 239.3,575.8 246.9,582.1 255,578.3" fill="none" stroke="#f4d675" stroke-width="1.5" stroke-linejoin="round" stroke-linecap="round" />
<polyline points="452,381.3 452,392.7 447,396.5 448.2,402.9 443.2,411.7 436.8,421.9 441.9,433.3 441.9,440.9 435.5,448.6" fill="none" stroke="#f4d675" stroke-width="2.2" stroke-linejoin="round" stroke-linecap="round" />
<polyline points="435.5,457.5 452,463.9 471.1,471.5 478.7,476.6 563,476 617.1,475.3" fill="none" stroke="#f4d675" stroke-width="2.4" stroke-linejoin="round" stroke-linecap="round" />
<polyline points="690,386.3 684.4,390.2 674.3,402.9 665.4,414.3 659,424.4 655.2,430.8 655.2,435.9 651.4,439.7 641.2,446 631.1,452.4 626,455 622.2,463.9 617.1,475.3 614.6,486.7 612.7,499.4 613.3,512.1 608.2,518.5 600.6,527.4 590.5,533.7" fill="none" stroke="#f4d675" stroke-width="2.4" stroke-linejoin="round" stroke-linecap="round" />
<polyline points="685,391 689.1,386.8 698.7,384.1 705.5,381.4" fill="none" stroke="#f4d675" stroke-width="2.2" stroke-linejoin="round" stroke-linecap="round" />
<polyline points="780.7,381.4 782.1,386.8 778,389.6 788.9,392.3 786.2,403.2 783.4,415.5 788.9,423.8 791.6,433.3 801.2,442.9 808.1,453.8 812.2,460 813.5,465.9 821.7,475.5" fill="none" stroke="#f4d675" stroke-width="2.2" stroke-linejoin="round" stroke-linecap="round" />
<polyline points="823,497.4 817.6,504.2 809.4,507 808,513.8 810.8,523.4 808,535 806,545" fill="none" stroke="#f4d675" stroke-width="2.2" stroke-linejoin="round" stroke-linecap="round" />
<polyline points="434.7,570.5 447.9,570.5 448.7,579.6 504.1,579.6 525.6,563.1 556,562.3 571.6,557.9 599.3,554.5 613.2,551 627.1,555.3 655,560.5 677.5,561.4 698.3,561.4 717.4,555.3 745.1,555.3 750.3,557.9 767.7,557.1 788.5,554.5 797.1,549.3 805.8,542.3 809.2,535.4 809.2,528.5 811,525" fill="none" stroke="#f4d675" stroke-width="2.4" stroke-linejoin="round" stroke-linecap="round" />
<polyline points="434.7,589.5 442.9,596.2 444.6,607.7 438,619.3 433,622.6" fill="none" stroke="#f4d675" stroke-width="2.2" stroke-linejoin="round" stroke-linecap="round" />
<polyline points="613.2,629 625.3,622.9 655,622.1 672.3,622.9 694.9,623.8 729.5,625.5 734.7,630.7 752.1,632.5 772.9,629 783.3,620.3 798.9,618.6 811,609.9 823.1,599.5" fill="none" stroke="#f4d675" stroke-width="2.4" stroke-linejoin="round" stroke-linecap="round" />
<polyline points="948,381 940,392 925,405 913,416 909,431" fill="none" stroke="#f4d675" stroke-width="1.8" stroke-linejoin="round" stroke-linecap="round" />
<polyline points="823,599.5 840,596 860,600 880,598 900,603 930,606 960,600 1000,590 1024,585" fill="none" stroke="#f4d675" stroke-width="2.2" stroke-linejoin="round" stroke-linecap="round" />
<polyline points="821.7,475.5 832,490 828,505 840,512 850,530 870,545 890,548 905,560 930,570" fill="none" stroke="#f4d675" stroke-width="2.2" stroke-linejoin="round" stroke-linecap="round" />
<polyline points="55.9,381 59.7,388.9 66,396.5 73.6,404.1 81.2,409.2 88.9,414.3 91.4,418.1" fill="none" stroke="#e9a53c" stroke-width="3.4" stroke-linejoin="round" stroke-linecap="round" />
<polyline points="113,485.5 120.6,494.4 123.8,503.2 120.6,512.1 120.6,526.1 125,531.3 130,547.9 129.4,563.1 129.4,578.8 131.3,587.7 135.2,594 137.7,597.9 142,606 146,618 150,632" fill="none" stroke="#e9a53c" stroke-width="3.2" stroke-linejoin="round" stroke-linecap="round" />
<polyline points="130,547.9 132.6,549.1 140.2,554.8 150.4,558.3 161.8,559.3 182.1,564.4 196.1,565.6" fill="none" stroke="#e9a53c" stroke-width="3" stroke-linejoin="round" stroke-linecap="round" />
<polyline points="241.8,455 236.7,465.2 232.9,475.3 232.9,486.7 234.2,496.9 234.2,503.2 226.6,510.9 220.2,521 211.3,529.9 206.2,532.6 201.2,537.7 198.6,546.6 196.1,549.1 198.6,556.7 199.9,566.9 202.4,575 206.2,582.6 207.5,594 210,604.2 211.3,609.3" fill="none" stroke="#e9a53c" stroke-width="3.2" stroke-linejoin="round" stroke-linecap="round" />
<polyline points="238,460 244.3,452.4 250,446 255,441" fill="none" stroke="#e9a53c" stroke-width="3.2" stroke-linejoin="round" stroke-linecap="round" />
<polyline points="235.4,488 244.3,490.5 252,496.9 255,498.2" fill="none" stroke="#e9a53c" stroke-width="3" stroke-linejoin="round" stroke-linecap="round" />
<polyline points="211.3,609.3 201.2,610.5 188.5,613.1 180.9,619.4 177,625.8 175.8,629.6 169.4,633.4 160,636" fill="none" stroke="#e9a53c" stroke-width="3" stroke-linejoin="round" stroke-linecap="round" />
<polyline points="211.3,609.3 221.5,610.5 226.6,613.1 236.7,616.9 246.9,623.2 255,628.3" fill="none" stroke="#e9a53c" stroke-width="3" stroke-linejoin="round" stroke-linecap="round" />
<polyline points="218.9,608 221.5,601.7 232.9,597.9 244.3,591.5 249.4,585.2 255,578.8" fill="none" stroke="#e9a53c" stroke-width="3" stroke-linejoin="round" stroke-linecap="round" />
<polyline points="234.2,599.1 239.3,608 246.9,619.4 252,628.3 255,630.9" fill="none" stroke="#e9a53c" stroke-width="2.8" stroke-linejoin="round" stroke-linecap="round" />
<polyline points="207.5,613.1 206.2,618.2 211.3,620.7 218.9,622 226.6,625.8 234.2,633.4 238,636" fill="none" stroke="#e9a53c" stroke-width="3" stroke-linejoin="round" stroke-linecap="round" />
<polyline points="221.5,601.7 218.9,611.8 216.4,620.7" fill="none" stroke="#e9a53c" stroke-width="2.6" stroke-linejoin="round" stroke-linecap="round" />
<polyline points="511.7,381 514.2,392.7 516.8,405.4 521.9,418.1 529.5,433.3 534.6,443.5 535.2,455 535.2,474 542.2,488 547.3,508.3 552.3,526.1 554.3,533.7 559.5,545.8 571.6,556.2 575.9,573.5 578.5,594.3 575.1,608.2 572.5,625.5 564.7,632.5 560,636" fill="none" stroke="#e9a53c" stroke-width="3.2" stroke-linejoin="round" stroke-linecap="round" />
<polyline points="562.5,381 567.6,392.7 574,407.9 580.3,421.9 585.4,433.3 586,451 586,460 586.7,474 587.3,505.8 587.3,525 589.8,537.1 595.9,556.2 601.1,575.3 602.8,594.3 602.8,609.9 611.5,622.1 614.9,629 620.1,636" fill="none" stroke="#e9a53c" stroke-width="3.2" stroke-linejoin="round" stroke-linecap="round" />
<polyline points="572.5,625.5 582,629 613.2,629" fill="none" stroke="#e9a53c" stroke-width="3" stroke-linejoin="round" stroke-linecap="round" />
<text x="58.4" y="426.3" font-size="12.8" fill="#333" text-anchor="start" font-weight="normal" stroke="#fff" stroke-width="2.4" stroke-opacity=".85" paint-order="stroke" stroke-linejoin="round">Petaluma</text>
<text x="50.5" y="382.3" font-size="12.8" fill="#333" text-anchor="start" font-weight="normal" stroke="#fff" stroke-width="2.4" stroke-opacity=".85" paint-order="stroke" stroke-linejoin="round">Park</text>
<text x="130.7" y="398.2" font-size="10.8" fill="#333" text-anchor="start" font-weight="normal" stroke="#fff" stroke-width="2.4" stroke-opacity=".85" paint-order="stroke" stroke-linejoin="round">Sonoma</text>
<text x="198" y="396.2" font-size="12.4" fill="#333" text-anchor="start" font-weight="normal" stroke="#fff" stroke-width="2.4" stroke-opacity=".85" paint-order="stroke" stroke-linejoin="round">Napa</text>
<text x="91.4" y="483.6" font-size="11.7" fill="#333" text-anchor="start" font-weight="normal" stroke="#fff" stroke-width="2.4" stroke-opacity=".85" paint-order="stroke" stroke-linejoin="round">Novato</text>
<text x="205" y="485.5" font-size="12.6" fill="#333" text-anchor="start" font-weight="normal" stroke="#fff" stroke-width="2.4" stroke-opacity=".85" paint-order="stroke" stroke-linejoin="round">Vallejo</text>
<text x="192.3" y="531.2" font-size="11.7" fill="#333" text-anchor="start" font-weight="normal" stroke="#fff" stroke-width="2.4" stroke-opacity=".85" paint-order="stroke" stroke-linejoin="round">Pinole</text>
<text x="171.3" y="496.3" font-size="10" fill="#5b7db3" text-anchor="middle" font-weight="normal" font-style="italic" stroke="#fff" stroke-width="0" stroke-opacity=".85" paint-order="stroke" stroke-linejoin="round">San</text>
<text x="171.3" y="506.4" font-size="10" fill="#5b7db3" text-anchor="middle" font-weight="normal" font-style="italic" stroke="#fff" stroke-width="0" stroke-opacity=".85" paint-order="stroke" stroke-linejoin="round">Pablo Bay</text>
<text x="93.1" y="545.3" font-size="12.3" fill="#333" text-anchor="start" font-weight="normal" stroke="#fff" stroke-width="2.4" stroke-opacity=".85" paint-order="stroke" stroke-linejoin="round">San Rafael</text>
<text x="92.1" y="576.6" font-size="12" fill="#333" text-anchor="start" font-weight="normal" stroke="#fff" stroke-width="2.4" stroke-opacity=".85" paint-order="stroke" stroke-linejoin="round">Mill Valley</text>
<text x="161.8" y="563" font-size="12.8" fill="#333" text-anchor="start" font-weight="normal" stroke="#fff" stroke-width="2.4" stroke-opacity=".85" paint-order="stroke" stroke-linejoin="round">Richmond</text>
<text x="191.6" y="592.8" font-size="13.4" fill="#333" text-anchor="start" font-weight="normal" stroke="#fff" stroke-width="2.4" stroke-opacity=".85" paint-order="stroke" stroke-linejoin="round">Berkeley</text>
<text x="245.6" y="524.8" font-size="12.5" fill="#333" text-anchor="start" font-weight="normal" stroke="#fff" stroke-width="2.4" stroke-opacity=".85" paint-order="stroke" stroke-linejoin="round">Martinez</text>
<text x="206.2" y="644" font-size="13" fill="#333" text-anchor="start" font-weight="normal" stroke="#fff" stroke-width="2.4" stroke-opacity=".85" paint-order="stroke" stroke-linejoin="round">Alameda</text>
<text x="-19.8" y="636.5" font-size="11.5" fill="#4f6c9c" text-anchor="start" font-weight="normal" font-style="italic" stroke="#fff" stroke-width="1.5" stroke-opacity=".85" paint-order="stroke" stroke-linejoin="round">Gulf of the</text>
<text x="151.5" y="629.8" font-size="14" fill="#222" text-anchor="start" font-weight="bold" stroke="#fff" stroke-width="2.4" stroke-opacity=".85" paint-order="stroke" stroke-linejoin="round">San</text>
<rect x="91.8" y="441.25" width="19" height="14.5" rx="6.04167" fill="#fff" stroke="#3a3a3a" stroke-width="1.1"/>
<text x="101.3" y="452.1" font-size="10" fill="#1a1a1a" text-anchor="middle" stroke="#1a1a1a" stroke-width=".25">101</text>
<path d="M241 440 h16 v9 q-1 5 -8 7 q-7 -2 -8 -7 z" fill="#3f6fb8"/><path d="M241 439 h16 v3.5 h-16 z" fill="#c9413a"/><text x="249" y="451" font-size="9.5" fill="#fff" text-anchor="middle">80</text>
<text x="488.5" y="406.5" font-size="9.3" fill="#666" text-anchor="start" font-weight="normal" transform="rotate(-16 488.5 406.5)" stroke="#fff" stroke-width="2.4" stroke-opacity=".85" paint-order="stroke" stroke-linejoin="round">Twin</text>
<text x="510.4" y="398.6" font-size="9.3" fill="#666" text-anchor="start" font-weight="normal" stroke="#fff" stroke-width="2.4" stroke-opacity=".85" paint-order="stroke" stroke-linejoin="round">Cities Rd</text>
<text x="470.3" y="444.5" font-size="8.8" fill="#666" text-anchor="start" font-weight="normal" transform="rotate(-60 470.3 444.5)" stroke="#fff" stroke-width="2.4" stroke-opacity=".85" paint-order="stroke" stroke-linejoin="round">River Rd</text>
<text x="562.5" y="414.9" font-size="11" fill="#333" text-anchor="start" font-weight="normal" stroke="#fff" stroke-width="2.4" stroke-opacity=".85" paint-order="stroke" stroke-linejoin="round">Galt</text>
<text x="610.5" y="424.4" font-size="9.5" fill="#777" text-anchor="start" font-weight="normal" stroke="#fff" stroke-width="2.4" stroke-opacity=".85" paint-order="stroke" stroke-linejoin="round">E Liberty Rd</text>
<text x="622.5" y="459" font-size="10" fill="#5e5030" text-anchor="start" font-weight="normal" transform="rotate(-31 622.5 459)" stroke="#fff" stroke-width="2.4" stroke-opacity=".85" paint-order="stroke" stroke-linejoin="round">Hwy 12</text>
<text x="672.6" y="439.2" font-size="9.6" fill="#5e5030" text-anchor="start" font-weight="normal" transform="rotate(26 672.6 439.2)" stroke="#fff" stroke-width="2.4" stroke-opacity=".85" paint-order="stroke" stroke-linejoin="round">Hwy 12</text>
<text x="729.4" y="438.8" font-size="11" fill="#333" text-anchor="start" font-weight="normal" stroke="#fff" stroke-width="2.4" stroke-opacity=".85" paint-order="stroke" stroke-linejoin="round">Valley</text>
<text x="725.3" y="450.4" font-size="11" fill="#333" text-anchor="start" font-weight="normal" stroke="#fff" stroke-width="2.4" stroke-opacity=".85" paint-order="stroke" stroke-linejoin="round">Springs</text>
<text x="491.7" y="479.8" font-size="10" fill="#5e5030" text-anchor="start" font-weight="normal" stroke="#fff" stroke-width="2.4" stroke-opacity=".85" paint-order="stroke" stroke-linejoin="round">Hwy 12</text>
<text x="555.5" y="453.8" font-size="9.2" fill="#666" text-anchor="start" font-weight="normal" transform="rotate(90 555.5 453.8)" stroke="#fff" stroke-width="2.4" stroke-opacity=".85" paint-order="stroke" stroke-linejoin="round">Davis Rd</text>
<text x="571.7" y="471.5" font-size="12" fill="#333" text-anchor="start" font-weight="normal" stroke="#fff" stroke-width="2.4" stroke-opacity=".85" paint-order="stroke" stroke-linejoin="round">Lodi</text>
<text x="600.3" y="483.6" font-size="9.5" fill="#555" text-anchor="start" font-weight="normal" transform="rotate(87 600.3 483.6)" stroke="#fff" stroke-width="2.4" stroke-opacity=".85" paint-order="stroke" stroke-linejoin="round">Alpine Rd</text>
<text x="622.7" y="472" font-size="9.7" fill="#555" text-anchor="start" font-weight="normal" transform="rotate(90 622.7 472)" stroke="#fff" stroke-width="2.4" stroke-opacity=".85" paint-order="stroke" stroke-linejoin="round">N Jack Tone Rd</text>
<text x="541.3" y="532.8" font-size="10.6" fill="#333" text-anchor="start" font-weight="normal" stroke="#fff" stroke-width="2.4" stroke-opacity=".85" paint-order="stroke" stroke-linejoin="round">Lakeview</text>
<text x="547.3" y="553.1" font-size="14.2" fill="#333" text-anchor="start" font-weight="normal" stroke="#fff" stroke-width="2.4" stroke-opacity=".85" paint-order="stroke" stroke-linejoin="round">Stockton</text>
<text x="566.4" y="580.1" font-size="10.8" fill="#333" text-anchor="start" font-weight="normal" stroke="#fff" stroke-width="2.4" stroke-opacity=".85" paint-order="stroke" stroke-linejoin="round">French</text>
<text x="568.5" y="592.3" font-size="10.8" fill="#333" text-anchor="start" font-weight="normal" stroke="#fff" stroke-width="2.4" stroke-opacity=".85" paint-order="stroke" stroke-linejoin="round">Camp</text>
<text x="580" y="626.9" font-size="12" fill="#333" text-anchor="start" font-weight="normal" stroke="#fff" stroke-width="2.4" stroke-opacity=".85" paint-order="stroke" stroke-linejoin="round">Manteca</text>
<text x="398.6" y="565.6" font-size="12.3" fill="#333" text-anchor="start" font-weight="normal" stroke="#fff" stroke-width="2.4" stroke-opacity=".85" paint-order="stroke" stroke-linejoin="round">Brentwood</text>
<text x="446.6" y="581.5" font-size="9.6" fill="#666" text-anchor="start" font-weight="normal" transform="rotate(58 446.6 581.5)" stroke="#fff" stroke-width="2.4" stroke-opacity=".85" paint-order="stroke" stroke-linejoin="round">Byron Hwy</text>
<text x="618.4" y="571.5" font-size="10" fill="#666" text-anchor="start" font-weight="normal" transform="rotate(30 618.4 571.5)" stroke="#fff" stroke-width="2.4" stroke-opacity=".85" paint-order="stroke" stroke-linejoin="round">E Mariposa Rd</text>
<text x="717.4" y="642" font-size="12" fill="#333" text-anchor="start" font-weight="normal" stroke="#fff" stroke-width="2.4" stroke-opacity=".85" paint-order="stroke" stroke-linejoin="round">Oakdale</text>
<text x="902" y="414.5" font-size="11" fill="#333" text-anchor="start" font-weight="normal" stroke="#fff" stroke-width="2.4" stroke-opacity=".85" paint-order="stroke" stroke-linejoin="round">Arnold</text>
<rect x="577.1" y="436.1" width="17.8" height="14" rx="5.83333" fill="#fff" stroke="#3a3a3a" stroke-width="1.1"/>
<text x="586" y="446.7" font-size="10" fill="#1a1a1a" text-anchor="middle" stroke="#1a1a1a" stroke-width=".25">99</text>
<rect x="695.9" y="477.1" width="17.8" height="14" rx="5.83333" fill="#fff" stroke="#3a3a3a" stroke-width="1.1"/>
<text x="704.8" y="487.7" font-size="10" fill="#1a1a1a" text-anchor="middle" stroke="#1a1a1a" stroke-width=".25">26</text>
<rect x="699.25" y="548.8" width="17.3" height="13" rx="5.41667" fill="#fff" stroke="#3a3a3a" stroke-width="1.1"/>
<text x="707.9" y="558.9" font-size="10" fill="#1a1a1a" text-anchor="middle" stroke="#1a1a1a" stroke-width=".25">4</text>
<rect x="672.35" y="616.8" width="22.5" height="13" rx="5.41667" fill="#fff" stroke="#3a3a3a" stroke-width="1.1"/>
<text x="683.6" y="626.9" font-size="10" fill="#1a1a1a" text-anchor="middle" stroke="#1a1a1a" stroke-width=".25">120</text>
<path d="M149.6 605.7 A15.4 15.4 0 0 1 180.4 605.7 C180.4 614.94 170.39 625.72 165 632.496 C159.61 625.72 149.6 614.94 149.6 605.7 Z" fill="#1d86cc"/>
<circle cx="165" cy="605.7" r="10.164" fill="#e9f3fa"/>
<polygon points="165.00,598.92 166.90,603.08 171.44,603.61 168.08,606.70 168.98,611.18 165.00,608.93 161.02,611.18 161.92,606.70 158.56,603.61 163.10,603.08" fill="#1d7fc2"/>
<path d="M131.3 607.2 A15.5 15.5 0 0 1 162.3 607.2 C162.3 616.5 152.225 627.35 146.8 634.17 C141.375 627.35 131.3 616.5 131.3 607.2 Z" fill="#1d86cc"/>
<circle cx="146.8" cy="607.2" r="10.23" fill="#e9f3fa"/>
<polygon points="146.80,600.38 148.71,604.57 153.29,605.09 149.90,608.21 150.81,612.72 146.80,610.46 142.79,612.72 143.70,608.21 140.31,605.09 144.89,604.57" fill="#1d7fc2"/>
<circle cx="-0.5" cy="504" r="3.2" fill="#fff" stroke="#bbb" stroke-width=".8"/>
<g><rect x="12.2" y="387.8" width="17.6" height="34.2" rx="2.5" fill="#fff" stroke="#c9c9c9" stroke-width="1"/><path d="M11.8 382.2 l4 4.2 h-8z M11.8 403.5 l4 -4.2 h-8z M1 393.3 l4.2 -3.8 v7.6z" fill="#5f7fae"/><rect x="6.2" y="388.3" width="11.4" height="9.8" rx="1.5" fill="#e9edf3" stroke="#aaa" stroke-width="1"/><rect x="8.2" y="391.4" width="7.4" height="1.8" fill="#5f7fae"/><circle cx="20.6" cy="395.2" r="3.6" fill="#f0b31e" stroke="#c98d12" stroke-width=".6"/><path d="M17.3 394.6 a3.6 3.6 0 0 1 6.6 -1.4 l-3 1.2z" fill="#555"/><path d="M16.2 400.2 q0 -1.4 1.4 -1.4 h6.4 q1.4 0 1.4 1.4 v7.8 h-1.6 v-1 l-.6 0 v9.2 h-4.8 v-9.2 l-.6 0 v1 h-1.6z" fill="#f2b61f" stroke="#c98d12" stroke-width=".6"/><path d="M18.6 398.8 l2.2 3 l2.2 -3z" fill="#d8502a"/></g>
<circle cx="1021" cy="421" r="5" fill="#fff" stroke="#b9cf98" stroke-width=".8"/><path d="M1021 417.5 l3 5.5 h-6z" fill="#5da04a"/><rect x="1020.4" y="423" width="1.2" height="1.6" fill="#5da04a"/>
<text x="1019.5" y="398" font-size="10" fill="#3f6f2f" text-anchor="start" font-weight="normal" stroke="#fff" stroke-width="2.4" stroke-opacity=".85" paint-order="stroke" stroke-linejoin="round">is</text>
<text x="1019.5" y="409" font-size="10" fill="#3f6f2f" text-anchor="start" font-weight="normal" stroke="#fff" stroke-width="2.4" stroke-opacity=".85" paint-order="stroke" stroke-linejoin="round">al</text>
<text x="889" y="541" font-size="11" fill="#333" text-anchor="start" font-weight="normal" stroke="#fff" stroke-width="2.4" stroke-opacity=".85" paint-order="stroke" stroke-linejoin="round">Sonora</text>
<text x="834" y="508" font-size="11" fill="#333" text-anchor="start" font-weight="normal" stroke="#fff" stroke-width="2.4" stroke-opacity=".85" paint-order="stroke" stroke-linejoin="round">Camp</text>
<rect x="899" y="596.5" width="22" height="13" rx="5.41667" fill="#fff" stroke="#3a3a3a" stroke-width="1.1"/>
<text x="910" y="606.6" font-size="10" fill="#1a1a1a" text-anchor="middle" stroke="#1a1a1a" stroke-width=".25">120</text>
</svg>
</div>
<div id="mt" class="abs"><b>Map</b><i>Satellite</i></div>
<div id="panel" class="abs"></div>
<div id="kw" class="abs">Title or Keyword</div>
<div class="abs" style="left:833px;top:486.5px;width:13.5px;height:13.5px;border-radius:2.5px;background:linear-gradient(#c9c9c9,#9a9a9a);border:1px solid #a9a9a9"><div style="position:absolute;left:2.5px;top:4.5px;width:6.5px;height:2.5px;background:#fff"></div></div>
<div class="cb" style="left:853px;top:487px"></div>
<div class="li" style="left:872.5px;top:486px;font-weight:bold;color:#235078">Listing</div>
<div class="cb" style="left:857px;top:513px"></div>
<div class="cb" style="left:857px;top:545px"></div>
<div class="cb" style="left:857px;top:577px"></div>
<div class="cb" style="left:857px;top:609px"></div>
<div class="li" style="top:510.5px">Cheap air tickets</div>
<div class="li" style="top:542.5px">Cleaning services</div>
<div class="li" style="top:574.5px">CollegeNews</div>
<div class="li" style="top:606.5px">Construction</div>
<svg class="abs" style="left:0;top:0;width:1024px;height:635px;pointer-events:none" viewBox="0 0 1024 635">
<defs>
<g id="chk"><path d="M3.2 8.6 L6.6 12 L12.8 4.2" fill="none" stroke="#fff" stroke-width="1.7" stroke-linecap="round" stroke-linejoin="round"/></g>
<g id="pin"><path d="M4.75 0.3 C2.2 0.3 0.4 2.2 0.4 4.6 C0.4 7.4 3.2 10.2 4.75 13.3 C6.3 10.2 9.1 7.4 9.1 4.6 C9.1 2.2 7.3 0.3 4.75 0.3 Z" fill="#2e96d6"/><circle cx="4.75" cy="4.6" r="2.5" fill="#fff"/><circle cx="4.75" cy="4.6" r="1.1" fill="#2e96d6"/></g>
</defs>
<use href="#chk" x="853" y="487"/>
<use href="#chk" x="857" y="513"/><use href="#chk" x="857" y="545"/><use href="#chk" x="857" y="577"/><use href="#chk" x="857" y="609"/>
<use href="#pin" x="883" y="510.5"/><use href="#pin" x="883" y="542.5"/><use href="#pin" x="883" y="574.5"/><use href="#pin" x="883" y="606.5"/>
</svg>
<div id="dd" class="abs"><div>About</div><div>AdMojo</div><div>Special Offer</div><div>Register to Vote (USA)</div><div>Register to Vote (CA)</div><div>Register to Vote (UK)</div><div>Register to Vote (EU)</div><div>Register to Vote (GDR)</div><div>Register to Vote (India)</div><div>Enrol to Vote (AU)</div></div>
</body></html>
